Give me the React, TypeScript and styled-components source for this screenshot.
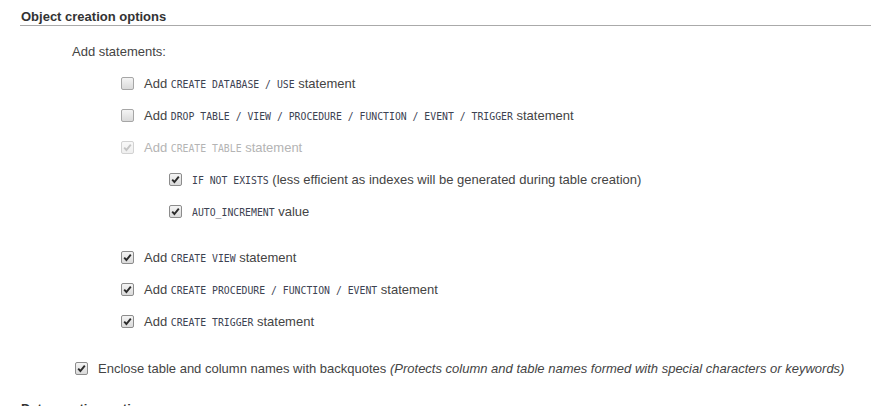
import React from 'react'
import styled, { createGlobalStyle } from 'styled-components'

const GlobalStyle = createGlobalStyle`
  html, body {
    margin: 0;
    padding: 0;
    background: #fff;
  }
  body {
    font-family: 'Liberation Sans', Arial, sans-serif;
    font-size: 13px;
    color: #444;
  }
`

const Page = styled.div`
  padding: 9px 0 0 20px;
  height: 406px;
  overflow: hidden;
  box-sizing: border-box;
`

const Legend = styled.div<{ gap?: number }>`
  margin-top: ${({ gap }) => gap ?? 0}px;
  padding-left: 1px;
  line-height: 16px;
  font-weight: bold;
  color: #333;
  border-bottom: 1px solid #aaa;
`

const Lead = styled.div`
  margin: 18px 0 7px 52px;
  line-height: 16px;
`

const List = styled.div<{ indent: number; after?: number }>`
  display: flex;
  flex-direction: column;
  padding-left: ${({ indent }) => indent}px;
  margin-bottom: ${({ after }) => after ?? 0}px;
`

const Row = styled.label<{ disabled?: boolean }>`
  display: flex;
  align-items: center;
  gap: 10px;
  height: 32px;
  color: ${({ disabled }) => (disabled ? '#b4b4b4' : '#444')};
  white-space: nowrap;
`

const Box = styled.span<{ checked?: boolean; disabled?: boolean }>`
  flex: none;
  width: 11px;
  height: 11px;
  border: 1px solid ${({ checked, disabled }) => (disabled ? '#d2d2d2' : checked ? '#8c8c8c' : '#a6a6a6')};
  border-radius: 2px;
  background: ${({ disabled }) =>
    disabled ? 'linear-gradient(#f8f8f8, #efefef)' : 'linear-gradient(#f4f4f4, #dadada)'};
  display: flex;
  align-items: center;
  justify-content: center;

  svg {
    display: block;
  }
`

const Code = styled.code<{ disabled?: boolean }>`
  font-family: 'DejaVu Sans Mono', Consolas, monospace;
  font-size: 9.8px;
  color: ${({ disabled }) => (disabled ? '#b4b4b4' : '#3d4252')};
`

const Note = styled.em`
  font-style: italic;
`

const Check = ({ checked, disabled }: { checked?: boolean; disabled?: boolean }) => (
  <Box checked={checked} disabled={disabled}>
    {checked && (
      <svg width="9" height="9" viewBox="0 0 9 9">
        <path
          d="M1.2 4.6 L3.4 7 L7.8 1.6"
          fill="none"
          stroke={disabled ? '#c4c4c4' : '#2b2b2b'}
          strokeWidth="1.9"
        />
      </svg>
    )}
  </Box>
)

const Opt = ({
  checked,
  disabled,
  children,
}: {
  checked?: boolean
  disabled?: boolean
  children: React.ReactNode
}) => (
  <Row disabled={disabled}>
    <Check checked={checked} disabled={disabled} />
    <span>{children}</span>
  </Row>
)

const App = () => {
  return (
    <>
      <GlobalStyle />
      <Page>
        <Legend>Object creation options</Legend>
        <Lead>Add statements:</Lead>
        <List indent={101}>
          <Opt>
            Add <Code>CREATE DATABASE / USE</Code> statement
          </Opt>
          <Opt>
            Add <Code>DROP TABLE / VIEW / PROCEDURE / FUNCTION / EVENT / TRIGGER</Code> statement
          </Opt>
          <Opt checked disabled>
            Add <Code disabled>CREATE TABLE</Code> statement
          </Opt>
        </List>
        <List indent={149} after={14}>
          <Opt checked>
            <Code>IF NOT EXISTS</Code> (less efficient as indexes will be generated during table
            creation)
          </Opt>
          <Opt checked>
            <Code>AUTO_INCREMENT</Code> value
          </Opt>
        </List>
        <List indent={101} after={15}>
          <Opt checked>
            Add <Code>CREATE VIEW</Code> statement
          </Opt>
          <Opt checked>
            Add <Code>CREATE PROCEDURE / FUNCTION / EVENT</Code> statement
          </Opt>
          <Opt checked>
            Add <Code>CREATE TRIGGER</Code> statement
          </Opt>
        </List>
        <List indent={55}>
          <Opt checked>
            Enclose table and column names with backquotes{' '}
            <Note>(Protects column and table names formed with special characters or keywords)</Note>
          </Opt>
        </List>
        <Legend gap={17}>Data creation options</Legend>
      </Page>
    </>
  )
}

export default App
